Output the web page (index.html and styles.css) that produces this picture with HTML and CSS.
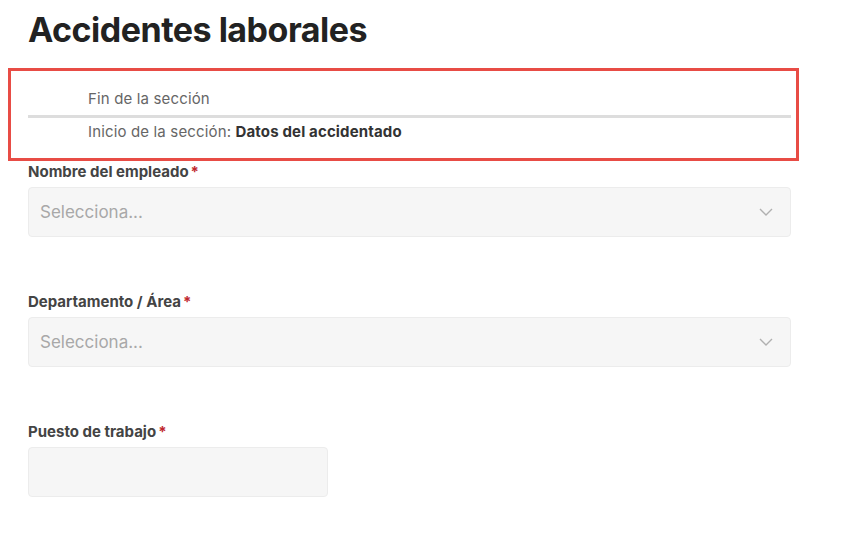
FILE: index.html
```html
<!DOCTYPE html>
<html lang="es">
<head>
<meta charset="utf-8">
<link rel="stylesheet" href="styles.css">
</head>
<body>
<main class="page">
  <h1 class="title">Accidentes laborales</h1>
  <section class="highlight">
    <div class="sec-end">Fin de la sección</div>
    <div class="sec-start">Inicio de la sección: <strong>Datos del accidentado</strong></div>
  </section>
  <div class="field">
    <label class="label">Nombre del empleado<span class="req">*</span></label>
    <div class="select">
      <span class="placeholder">Selecciona...</span>
      <svg class="chev" width="14" height="8" viewBox="0 0 14 8"><path d="M1 1l6 6 6-6" fill="none" stroke="#b0b0b0" stroke-width="1.4"/></svg>
    </div>
  </div>
  <div class="field">
    <label class="label">Departamento / Área<span class="req">*</span></label>
    <div class="select">
      <span class="placeholder">Selecciona...</span>
      <svg class="chev" width="14" height="8" viewBox="0 0 14 8"><path d="M1 1l6 6 6-6" fill="none" stroke="#b0b0b0" stroke-width="1.4"/></svg>
    </div>
  </div>
  <div class="field">
    <label class="label">Puesto de trabajo<span class="req">*</span></label>
    <div class="input"></div>
  </div>
</main>
</body>
</html>
```
FILE: styles.css
```css
html, body { margin: 0; padding: 0; background: #fff; }
body { font-family: Inter, "Noto Sans", sans-serif; color: #333; }
.page { padding: 0 52px 0 28px; display: flex; flex-direction: column; }
.title { margin: 0; padding-top: 8px; font-size: 34px; font-weight: 700; color: #222; line-height: 44px; letter-spacing: -0.5px; }
.highlight { margin: 16px -8px 0 -20px; border: 3px solid #e84c45; padding: 18px 5px 16px 17px; }
.sec-end { padding-left: 60px; font-size: 15px; letter-spacing: 0.15px; color: #666; line-height: 20px; padding-bottom: 6px; border-bottom: 3px solid #dddddd; }
.sec-start { padding-left: 60px; font-size: 15px; letter-spacing: 0.15px; color: #666; line-height: 20px; padding-top: 4px; }
.sec-start strong { color: #333; font-weight: 700; }
.field { display: flex; flex-direction: column; margin-top: 1px; }
.field + .field { margin-top: 55px; }
.label { font-size: 15px; font-weight: 700; color: #444; line-height: 20px; margin: 0 0 5px; }
.req { color: #c0272d; margin-left: 2px; }
.select { height: 48px; background: #f6f6f6; border: 1px solid #ececec; border-radius: 4px; display: flex; align-items: center; justify-content: space-between; padding: 0 17px 0 11px; }
.placeholder { font-size: 17px; color: #a8a8a8; }
.input { width: 298px; height: 48px; background: #f6f6f6; border: 1px solid #ececec; border-radius: 4px; }
```
